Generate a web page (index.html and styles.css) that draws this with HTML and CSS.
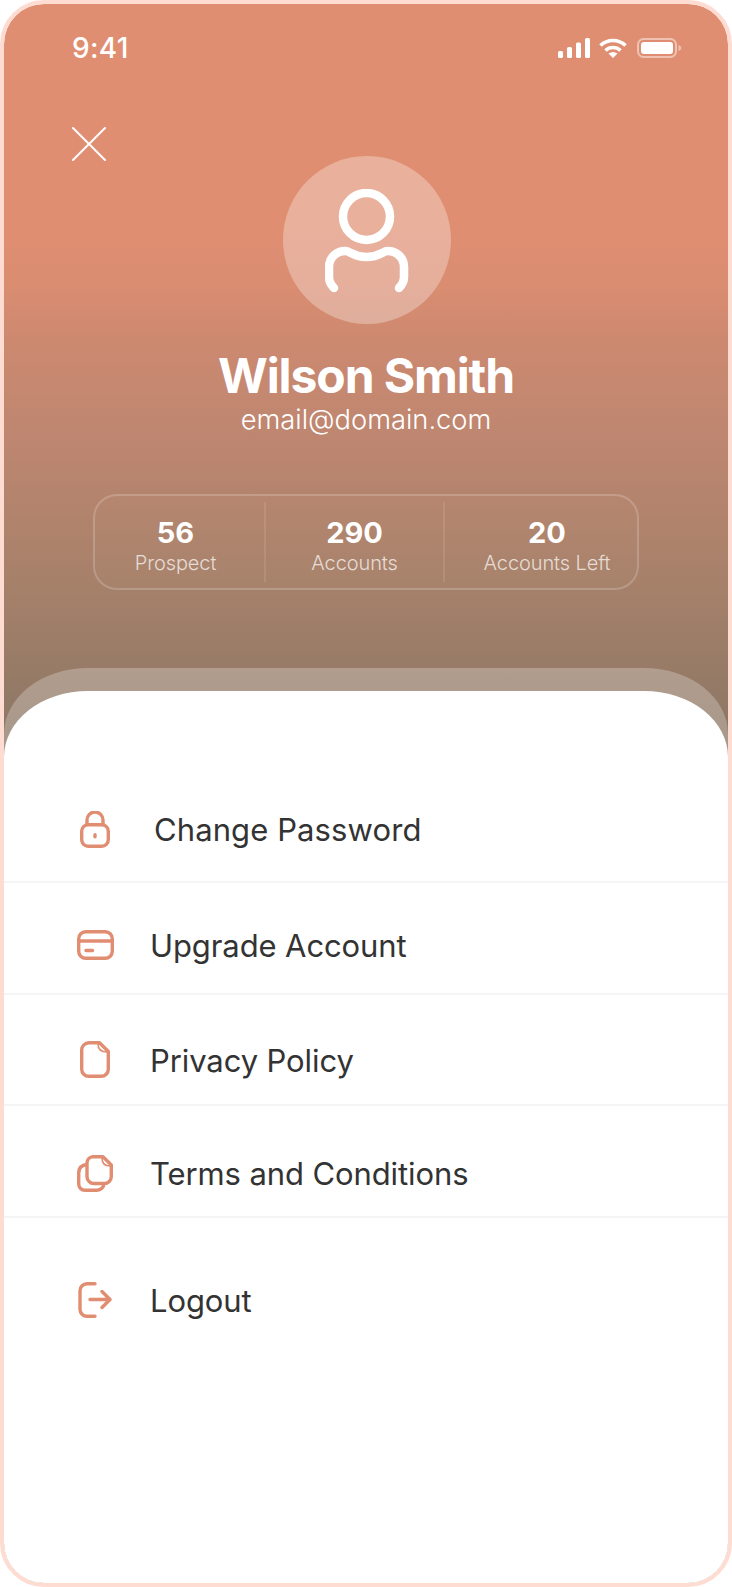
FILE: index.html
```html
<!DOCTYPE html>
<html lang="en">
<head>
<meta charset="utf-8">
<title>Profile</title>
<link rel="stylesheet" href="styles.css">
</head>
<body>
<main class="phone">
  <header class="hero">
    <div class="status">
      <span class="time">9:41</span>
      <div class="status-icons">
        <svg class="signal" width="32" height="20" viewBox="0 0 32 20" fill="#fff"><rect x="0" y="13" width="5" height="7" rx="1.5"/><rect x="9" y="9" width="5" height="11" rx="1.5"/><rect x="18" y="4.5" width="5" height="15.5" rx="1.5"/><rect x="27" y="0" width="5" height="20" rx="1.5"/></svg>
        <svg class="wifi" width="28" height="20" viewBox="0 0 28 20" fill="none" stroke="#fff" stroke-width="3.6"><path d="M1.5 7.5A18 18 0 0 1 26.5 7.5"/><path d="M6.5 12.5A11 11 0 0 1 21.5 12.5"/><path d="M14 20L9.5 15.5Q14 12.5 18.5 15.5Z" fill="#fff" stroke="none"/></svg>
        <svg class="battery" width="45" height="20" viewBox="0 0 45 20" fill="none"><rect x="1" y="1" width="38" height="18" rx="5.5" stroke="#fff" stroke-opacity=".45" stroke-width="2"/><rect x="4" y="4" width="32" height="12" rx="3" fill="#fff"/><path d="M41.5 7c1.8.6 2.8 1.7 2.8 3s-1 2.4-2.8 3z" fill="#fff" fill-opacity=".45"/></svg>
      </div>
    </div>
    <button class="close" type="button" aria-label="Close">
      <svg width="34" height="34" viewBox="0 0 34 34" fill="none" stroke="#fff" stroke-width="2" stroke-linecap="round"><path d="M1 1L33 33"/><path d="M33 1L1 33"/></svg>
    </button>
    <div class="avatar">
      <svg width="84" height="106" viewBox="0 0 84 106" fill="none" stroke="#fff" stroke-width="8.5" stroke-linecap="round" stroke-linejoin="round"><circle cx="41.500" cy="27.500" r="23.500"/><path d="M9 99C5 95 4 92 4 88V78C4 68 12 62 20.500 62C25 62 29 68 41.500 68C54 68 58 62 62.500 62C71 62 79 68 79 78V88C79 92 78 95 74 99"/></svg>
    </div>
    <h1 class="name">Wilson Smith</h1>
    <p class="email">email@domain.com</p>
    <section class="stats">
      <div class="stat stat-first"><strong>56</strong><span>Prospect</span></div>
      <div class="stat"><strong>290</strong><span>Accounts</span></div>
      <div class="stat stat-last"><strong>20</strong><span>Accounts Left</span></div>
    </section>
  </header>
  <nav class="sheet">
    <a class="row row-1">
      <span class="ico"><svg width="30" height="37" viewBox="0 0 30 37" fill="none" stroke="#e08d72" stroke-width="3.4" stroke-linecap="round"><rect x="1.700" y="13.700" width="26.600" height="21.600" rx="6.500"/><path d="M7 13.500V9a8 8 0 0 1 16 0V13.500"/><path d="M15 23.700V25.700"/></svg></span>
      <span class="label label-shift">Change Password</span>
    </a>
    <a class="row row-2">
      <span class="ico"><svg width="37" height="30" viewBox="0 0 37 30" fill="none" stroke="#e08d72" stroke-width="3.400" stroke-linecap="round"><rect x="1.700" y="1.700" width="33.600" height="26.600" rx="7"/><path d="M2 11H35" stroke-linecap="butt"/><path d="M9 20.500H15.500"/></svg></span>
      <span class="label">Upgrade Account</span>
    </a>
    <a class="row row-3">
      <span class="ico"><svg width="30" height="37" viewBox="0 0 30 37" fill="none" stroke="#e08d72" stroke-width="3.400" stroke-linejoin="round"><path d="M9 1.700H19.500L28.300 10.500V28.300a7 7 0 0 1-7 7H8.700a7 7 0 0 1-7-7V9a7.300 7.300 0 0 1 7.300-7.300Z"/><path d="M18 3C18 8 21 11 27 11" stroke-width="1.600"/></svg></span>
      <span class="label">Privacy Policy</span>
    </a>
    <a class="row row-4">
      <span class="ico"><svg width="36" height="37" viewBox="0 0 36 37" fill="none" stroke="#e08d72" stroke-width="3.400" stroke-linejoin="round"><path d="M16 1.700H26L34.300 10V21.500a7 7 0 0 1-7 7H17a7 7 0 0 1-7-7V8a6.300 6.300 0 0 1 6-6.300Z"/><path d="M10 9.500C5 10 1.700 13 1.700 18V29a6.300 6.300 0 0 0 6.300 6.300H20a7 7 0 0 0 7-6.800"/><path d="M25 3C25 8 28 11 33 11" stroke-width="1.600"/></svg></span>
      <span class="label">Terms and Conditions</span>
    </a>
    <a class="row row-5">
      <span class="ico"><svg width="34" height="36" viewBox="0 0 34 36" fill="none" stroke="#e08d72" stroke-width="3.400" stroke-linecap="round" stroke-linejoin="round"><path d="M17 1.700H9a7 7 0 0 0-7 7V27.300a7 7 0 0 0 7 7H17"/><path d="M12 17.500H32M24 9.500L32 17.500L24 25.500"/></svg></span>
      <span class="label">Logout</span>
    </a>
  </nav>
</main>
</body>
</html>
```
FILE: styles.css
```css
* { box-sizing: border-box; }
html, body { margin: 0; padding: 0; background: #fff; }
body { width: 732px; height: 1587px; font-family: Inter, "Liberation Sans", sans-serif; }
.phone {
  width: 732px;
  height: 1587px;
  border: 4px solid #ffdcd2;
  border-radius: 44px;
  overflow: hidden;
  display: flex;
  flex-direction: column;
  background: linear-gradient(180deg, #e08e72 0, #e08e72 225px, #da8d71 280px, #cc8970 340px, #bd8670 440px, #a8816a 570px, #8a7765 740px, #8a7765 100%);
  background-origin: padding-box;
  background-clip: padding-box;
}
.hero { height: 664px; flex: none; color: #fff; display: flex; flex-direction: column; align-items: center; }
.status { width: 100%; display: flex; justify-content: space-between; align-items: center; padding: 33px 46px 0 68px; height: 55px; }
.time { font-size: 28px; font-weight: 500; line-height: 20px; letter-spacing: 0.3px; }
.status-icons { display: flex; gap: 9px; align-items: center; }
.wifi { margin-right: 1px; }
.close { align-self: flex-start; background: none; border: 0; padding: 0; margin: 68px 0 0 68px; width: 34px; height: 34px; display: block; }
.close svg { display: block; }
.avatar { width: 168px; height: 168px; border-radius: 50%; background: rgba(255,255,255,.3); margin: -5px 0 0 2px; display: flex; align-items: center; justify-content: center; flex: none; }
.avatar svg { display: block; margin-top: 4px; }
.name { margin: 23px 0 0; font-size: 48px; line-height: 58px; font-weight: 700; letter-spacing: -1.1px; }
.email { margin: -1px 0 0; font-size: 27.3px; line-height: 32px; font-weight: 300; }
.stats { margin-top: 58px; width: 546px; height: 96px; border: 2px solid rgba(255,255,255,.18); border-radius: 24px; background: rgba(255,255,255,.02); display: grid; grid-template-columns: 171px 179px 1fr; padding: 6px 0; }
.stat { display: flex; flex-direction: column; align-items: center; justify-content: center; padding-top: 8px; border-right: 2px solid rgba(255,255,255,.1); }
.stat-first { padding-right: 8px; }
.stat-last { border-right: 0; padding-left: 12px; }
.stat strong { font-size: 29px; line-height: 34px; font-weight: 700; }
.stat span { font-size: 20px; line-height: 26px; font-weight: 300; color: rgba(255,255,255,.72); letter-spacing: -0.1px; }
.sheet { flex: 1; position: relative; background: #fff; margin-top: 23px; border-radius: 84px 84px 0 0 / 66px 66px 0 0; display: flex; flex-direction: column; padding-top: 80px; }
.sheet::before { content: ""; position: absolute; left: 0; right: 0; top: -23px; height: 90px; background: rgba(255,255,255,.25); border-radius: 84px 84px 0 0 / 66px 66px 0 0; }
.row { position: relative; display: flex; align-items: center; height: 112px; padding-left: 66px; border-bottom: 2px solid #f5f5f5; background: #fff; }
.row-1 { padding-top: 6px; }
.row-2 { padding-top: 14px; }
.row-3 { padding-top: 20px; height: 111px; }
.row-4 { padding-top: 24px; }
.row-5 { border-bottom: 0; height: 164px; }
.ico { width: 50px; display: flex; justify-content: center; flex: none; }
.ico svg { display: block; }
.label { margin-left: 30px; padding-top: 2px; font-size: 31px; line-height: 40px; font-weight: 400; letter-spacing: -0.1px; color: #333; white-space: nowrap; }
.label-shift { margin-left: 34px; letter-spacing: 0.1px; }
```
